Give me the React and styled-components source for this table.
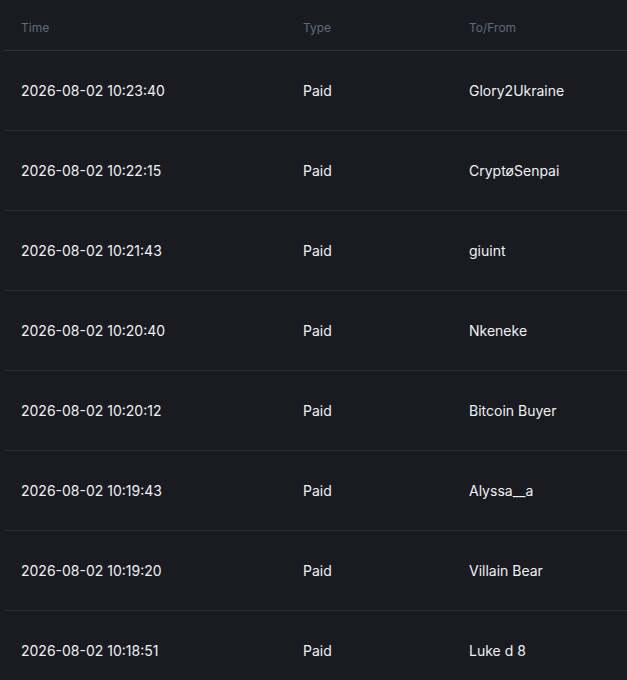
import React from 'react';
import styled, { createGlobalStyle } from 'styled-components';

const GlobalStyle = createGlobalStyle`
  html, body {
    margin: 0;
    padding: 0;
    background: #1a1b20;
  }
  body {
    font-family: Inter, "Liberation Sans", sans-serif;
    -webkit-font-smoothing: antialiased;
  }
`;

const rows = [
  { time: '2026-08-02 10:23:40', type: 'Paid', who: 'Glory2Ukraine' },
  { time: '2026-08-02 10:22:15', type: 'Paid', who: 'CryptøSenpai' },
  { time: '2026-08-02 10:21:43', type: 'Paid', who: 'giuint' },
  { time: '2026-08-02 10:20:40', type: 'Paid', who: 'Nkeneke' },
  { time: '2026-08-02 10:20:12', type: 'Paid', who: 'Bitcoin Buyer' },
  { time: '2026-08-02 10:19:43', type: 'Paid', who: 'Alyssa__a' },
  { time: '2026-08-02 10:19:20', type: 'Paid', who: 'Villain Bear' },
  { time: '2026-08-02 10:18:51', type: 'Paid', who: 'Luke d 8' },
];

function App() {
  return (
    <>
      <GlobalStyle />
      <Page>
        <Table>
          <HeadRow>
            <HeadCell>Time</HeadCell>
            <HeadCell>Type</HeadCell>
            <HeadCell>To/From</HeadCell>
          </HeadRow>
          {rows.map((r, i) => (
            <Row key={i}>
              <Cell>{r.time}</Cell>
              <Cell>{r.type}</Cell>
              <Cell>{r.who}</Cell>
            </Row>
          ))}
        </Table>
      </Page>
    </>
  );
}

const Page = styled.div`
  width: 627px;
  height: 680px;
  overflow: hidden;
  background: #1a1b20;
  padding-left: 4px;
  box-sizing: border-box;
`;

const Table = styled.div`
  display: flex;
  flex-direction: column;
`;

const HeadRow = styled.div`
  display: grid;
  grid-template-columns: 282px 166px 1fr;
  align-items: center;
  height: 50px;
  padding-left: 17px;
  border-bottom: 1px solid #2d3340;
  box-sizing: content-box;
`;

const HeadCell = styled.div`
  font-size: 12px;
  color: #5f6a7e;
  padding-top: 5px;
`;

const Row = styled.div`
  display: grid;
  grid-template-columns: 282px 166px 1fr;
  align-items: center;
  height: 79px;
  padding-left: 17px;
  border-bottom: 1px solid #2b2d33;
  box-sizing: content-box;
`;

const Cell = styled.div`
  font-size: 14px;
  color: #eef1f5;
`;

export default App;
